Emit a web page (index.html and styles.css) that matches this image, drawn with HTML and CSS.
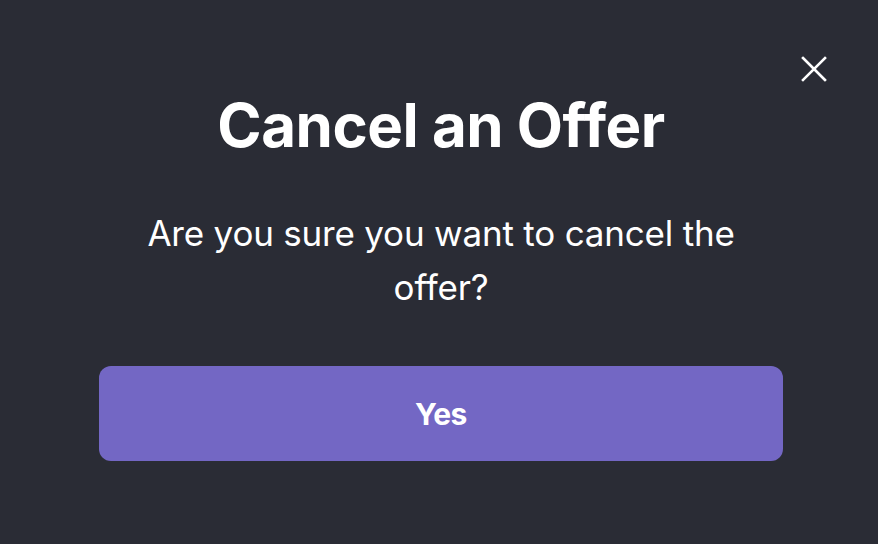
FILE: index.html
```html
<!DOCTYPE html>
<html lang="en">
<head>
<meta charset="utf-8">
<title>Cancel an Offer</title>
<link rel="stylesheet" href="styles.css">
</head>
<body>
<div class="modal">
  <div class="modal-top">
    <button class="close" aria-label="Close">
      <svg width="28" height="28" viewBox="0 0 28 28" fill="none" stroke="#ffffff" stroke-width="2.6" stroke-linecap="square">
        <path d="M3 3 L25 25 M25 3 L3 25"/>
      </svg>
    </button>
  </div>
  <h1 class="title">Cancel an Offer</h1>
  <p class="message">Are you sure you want to cancel the offer?</p>
  <button class="confirm">Yes</button>
</div>
</body>
</html>
```
FILE: styles.css
```css
html, body {
  margin: 0;
  padding: 0;
  background: #2a2c35;
}
body {
  width: 878px;
  height: 544px;
  overflow: hidden;
  font-family: "Inter", "Noto Sans", sans-serif;
  color: #ffffff;
}
.modal {
  display: flex;
  flex-direction: column;
  align-items: center;
  padding: 55px 95px 0 99px;
}
.modal-top {
  align-self: stretch;
  display: flex;
  justify-content: flex-end;
  height: 28px;
}
.close {
  background: none;
  border: 0;
  padding: 0;
  margin-right: -45px;
  width: 28px;
  height: 28px;
  cursor: pointer;
}
.title {
  margin: 6px 0 0;
  font-size: 60px;
  font-weight: 700;
  letter-spacing: -0.5px;
  line-height: 72px;
}
.message {
  margin: 45px 0 0;
  width: 640px;
  text-align: center;
  font-size: 35px;
  font-weight: 400;
  line-height: 54px;
  letter-spacing: -0.2px;
}
.confirm {
  margin-top: 52px;
  align-self: stretch;
  height: 95px;
  border: 0;
  border-radius: 12px;
  background: #7367c4;
  color: #ffffff;
  font-family: inherit;
  font-size: 30px;
  font-weight: 700;
  letter-spacing: -0.5px;
}
```
